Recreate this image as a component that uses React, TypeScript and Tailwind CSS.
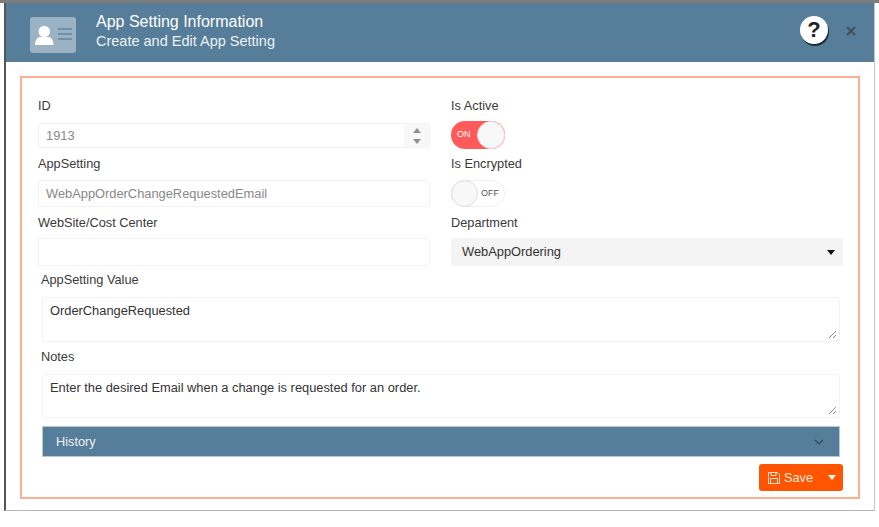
import React from "react";

function Label({ children, className = "" }: { children: React.ReactNode; className?: string }) {
  return <div className={"h-[16px] text-[12.75px] leading-[16px] text-[#3a3a3a] " + className}>{children}</div>;
}

function Field({ children, className = "" }: { children?: React.ReactNode; className?: string }) {
  return (
    <div className={"flex items-center rounded-[3px] border border-[#f2f2f2] bg-white px-[7px] text-[12.85px] " + className}>
      {children}
    </div>
  );
}

function Resize() {
  return (
    <svg className="absolute bottom-[2px] right-[2px]" width="9" height="9" viewBox="0 0 9 9">
      <path d="M1 8 8 1M5 8 8 5" stroke="#888" strokeWidth="1" />
    </svg>
  );
}

export default function App() {
  return (
    <div className="h-[527px] w-[879px] overflow-hidden bg-white font-['Liberation_Sans',Arial,sans-serif]">
      <div className="h-[3px] bg-[#7d7d7d]" />
      <div className="mx-[4px] h-[508px] border-b border-l-[2px] border-r border-b-[#b5b5b5] border-l-[#555] border-r-[#c8c8c8] bg-white">
        <div className="flex h-[59px] items-center bg-[#567d99] pl-[24px] pr-[18px]">
          <svg className="mt-[5px]" width="46" height="36" viewBox="0 0 46 36">
            <rect width="46" height="36" rx="3" fill="#9ab2c3" />
            <circle cx="14.3" cy="14.5" r="5.8" fill="#fff" />
            <path d="M5 28c0-5 2.500-8 5-8h8.500c2.500 0 5 3 5 8Z" fill="#fff" />
            <path d="M28 12h14M28 17h14M28 22h14" stroke="#6f90a8" strokeWidth="2" />
          </svg>
          <div className="ml-[20px] -mt-[3px] flex-1 text-white">
            <div className="text-[16px] leading-[21px]">App Setting Information</div>
            <div className="text-[14.5px] leading-[19px] text-[#eef3f6]">Create and Edit App Setting</div>
          </div>
          <div className="-mt-[5px] flex h-[28px] w-[28px] items-center justify-center rounded-full bg-white text-[22px] font-bold leading-none text-[#222] shadow-[1px_2px_0_#1c2b36]">?</div>
          <svg className="-mt-[3px] ml-[18px]" width="10" height="10" viewBox="0 0 10 10">
            <path d="M1 1 9 9M9 1 1 9" stroke="#414f5c" strokeWidth="2" />
          </svg>
        </div>
        <div className="mx-[14px] mt-[14px] h-[423px] border-2 border-[#ffaf8f] px-[16px] pt-[16px]">
          <div className="grid grid-cols-[392px_392px] gap-x-[21px]">
            <div>
              <Label className="mt-[4px]">ID</Label>
              <Field className="relative mt-[9px] h-[25px] text-[#888]">
                1913
                <div className="absolute bottom-0 right-0 top-0 flex w-[25px] flex-col items-center justify-center gap-[6px] bg-[#f8f8f8]">
                  <span className="h-0 w-0 border-x-[4px] border-b-[5px] border-x-transparent border-b-[#8f8f8f]" />
                  <span className="h-0 w-0 border-x-[4px] border-t-[5px] border-x-transparent border-t-[#8f8f8f]" />
                </div>
              </Field>
            </div>
            <div>
              <Label className="mt-[4px]">Is Active</Label>
              <div className="mt-[7px] flex h-[28px] w-[54px] items-center justify-between rounded-full bg-[#ff5a5a] pl-[6px] text-[9px] text-white">
                ON
                <span className="h-[28px] w-[28px] rounded-full border border-[#f3dcdc] bg-[#f8f8f8]" />
              </div>
            </div>
            <div>
              <Label className="mt-[7px]">AppSetting</Label>
              <Field className="mt-[8px] h-[27px] text-[#888]">WebAppOrderChangeRequestedEmail</Field>
            </div>
            <div>
              <Label className="mt-[7px]">Is Encrypted</Label>
              <div className="mt-[8px] flex h-[27px] w-[54px] items-center justify-between rounded-full border border-[#eee] bg-white pr-[5px] text-[9px] text-[#555]">
                <span className="-ml-px h-[27px] w-[27px] rounded-full border border-[#ddd] bg-[#f8f8f8]" />
                OFF
              </div>
            </div>
            <div>
              <Label className="mt-[8px]">WebSite/Cost Center</Label>
              <Field className="mt-[7px] h-[28px]" />
            </div>
            <div>
              <Label className="mt-[8px]">Department</Label>
              <div className="mt-[7px] flex h-[28px] items-center justify-between rounded-[3px] bg-[#f4f4f4] pl-[11px] pr-[8px] text-[12.85px] text-[#333]">
                WebAppOrdering
                <span className="h-0 w-0 border-x-[4px] border-t-[5px] border-x-transparent border-t-[#111]" />
              </div>
            </div>
          </div>
          <div className="ml-[3px] w-[799px]">
            <Label className="mt-[6px]">AppSetting Value</Label>
            <Field className="relative ml-px mt-[9px] h-[45px] items-start px-[5px] pt-[3px] text-[#333]">
              OrderChangeRequested
              <Resize />
            </Field>
            <Label className="mt-[7px]">Notes</Label>
            <Field className="relative ml-px mt-[9px] h-[44px] items-start px-[5px] pt-[3px] text-[#333]">
              Enter the desired Email when a change is requested for an order.
              <Resize />
            </Field>
            <div className="ml-px mt-[8px] flex h-[31px] items-center justify-between border border-[#b6c8d4] bg-[#567d99] pl-[13px] pr-[15px] text-[12.75px] text-[#eef3f6]">
              History
              <svg width="10" height="6" viewBox="0 0 10 6">
                <path d="M1 1 5 5 9 1" fill="none" stroke="#33475a" strokeWidth="1.2" />
              </svg>
            </div>
            <div className="mt-[7px] flex justify-end">
              <div className="-mr-[3px] flex h-[27px] w-[84px] items-center rounded-[3px] bg-[#ff5500] pl-[8px] text-[12.75px] text-[#ffe9df]">
                <svg width="14" height="14" viewBox="0 0 14 14" fill="none" stroke="#ffe1d2" strokeWidth="1">
                  <path d="M1.500 1.500h9l2 2v9h-11Z" />
                  <path d="M4 1.500v3h5v-3M3.500 12.500v-5h7v5" />
                </svg>
                <span className="ml-[3px]">Save</span>
                <span className="ml-[15px] h-0 w-0 border-x-[4px] border-t-[5px] border-x-transparent border-t-white" />
              </div>
            </div>
          </div>
        </div>
      </div>
    </div>
  );
}
